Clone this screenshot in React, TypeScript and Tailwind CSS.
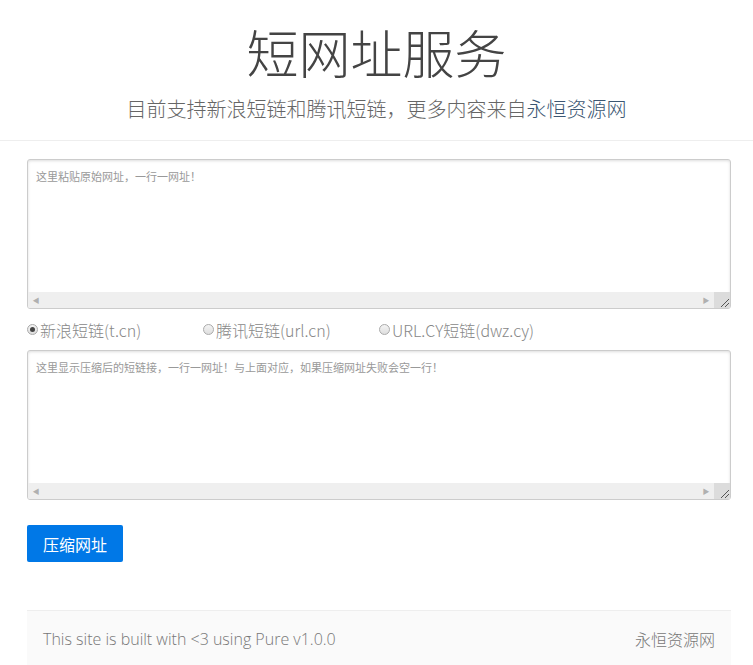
import { useState } from "react";

const cjk = "font-['Segoe_UI','Noto_Sans_CJK_SC',sans-serif]";

function FakeTextarea({ placeholder }: { placeholder: string }) {
  return (
    <div className="flex flex-col rounded-[3px] border border-[#ccc] shadow-[inset_0_1px_3px_#ddd] overflow-hidden bg-white">
      <textarea
        placeholder={placeholder}
        className="h-[132px] w-full resize-none bg-transparent px-[8px] py-[8px] text-[11px] leading-[16px] text-[#555] outline-none placeholder:text-[#999]"
        wrap="off"
      />
      <div className="flex h-[16px] items-center bg-[#efefef]">
        <span className="flex w-[16px] justify-center text-[7px] text-[#b0b0b0]">◀</span>
        <span className="flex-1" />
        <span className="flex w-[16px] justify-center text-[7px] text-[#b0b0b0]">▶</span>
        <span className="flex h-[16px] w-[16px] items-end justify-end bg-[#dcdcdc]">
          <svg width="12" height="12" viewBox="0 0 12 12">
            <path d="M11 3 L3 11 M11 7 L7 11" stroke="#555" strokeWidth="1" />
          </svg>
        </span>
      </div>
    </div>
  );
}

function Radio({ label, checked, onClick }: { label: string; checked: boolean; onClick: () => void }) {
  return (
    <label onClick={onClick} className="flex cursor-pointer items-center text-[16px] font-light text-[#888]">
      <span className="mr-[2px] flex h-[11px] w-[11px] items-center justify-center rounded-full border border-[#aaa] bg-gradient-to-b from-[#f4f4f4] to-[#dedede]">
        {checked && <span className="h-[5px] w-[5px] rounded-full bg-[#444]" />}
      </span>
      {label}
    </label>
  );
}

export default function App() {
  const [mode, setMode] = useState("sina");

  return (
    <div className={`min-h-screen bg-white ${cjk}`}>
      <header className="border-b border-[#eee] pt-[18px] pb-[15px] text-center">
        <h1 className="text-[52px] font-light leading-[68px] text-[#444]">短网址服务</h1>
        <h2 className="mt-[7px] text-[20px] font-light leading-[32px] text-[#666]">
          目前支持新浪短链和腾讯短链，更多内容来自<a className="text-[#3b5672]">永恒资源网</a>
        </h2>
      </header>

      <main className="pl-[27px] pr-[22px] pt-[18px]">
        <FakeTextarea placeholder="这里粘贴原始网址，一行一网址！" />

        <div className="grid h-[41px] grid-cols-4 items-center">
          <Radio label="新浪短链(t.cn)" checked={mode === "sina"} onClick={() => setMode("sina")} />
          <Radio label="腾讯短链(url.cn)" checked={mode === "qq"} onClick={() => setMode("qq")} />
          <Radio label="URL.CY短链(dwz.cy)" checked={mode === "cy"} onClick={() => setMode("cy")} />
        </div>

        <FakeTextarea placeholder="这里显示压缩后的短链接，一行一网址！与上面对应，如果压缩网址失败会空一行！" />

        <button className="mt-[25px] h-[37px] rounded-[2px] bg-[#0078e7] px-[16px] text-[16px] text-white">
          压缩网址
        </button>

        <footer className="mt-[48px] flex items-center justify-between border-t border-[#eee] bg-[#fafafa] px-[16px] pt-[16px] pb-[20px] text-[16px] font-light text-[#777]">
          <span className="font-['Open_Sans','Noto_Sans_CJK_SC',sans-serif]">This site is built with &lt;3 using Pure v1.0.0</span>
          <a>永恒资源网</a>
        </footer>
      </main>
    </div>
  );
}
